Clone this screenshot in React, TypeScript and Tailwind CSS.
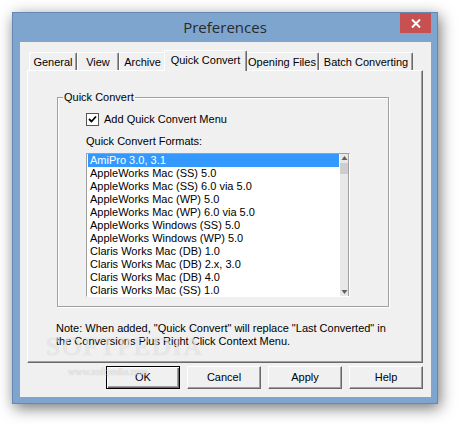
import React from "react";

const items = [
  "AmiPro 3.0, 3.1",
  "AppleWorks Mac (SS) 5.0",
  "AppleWorks Mac (SS) 6.0 via 5.0",
  "AppleWorks Mac (WP) 5.0",
  "AppleWorks Mac (WP) 6.0 via 5.0",
  "AppleWorks Windows (SS) 5.0",
  "AppleWorks Windows (WP) 5.0",
  "Claris Works Mac (DB) 1.0",
  "Claris Works Mac (DB) 2.x, 3.0",
  "Claris Works Mac (DB) 4.0",
  "Claris Works Mac (SS) 1.0",
  "Claris Works Mac (SS) 2.x, 3.0",
];

function Tab({ label, w }: { label: string; w: string }) {
  return (
    <div
      className={`${w} h-[18px] border-t border-l border-white border-r border-r-[#696969] rounded-t-[2px] shadow-[inset_-1px_0_0_#a0a0a0] flex items-center justify-center pt-[1px] whitespace-nowrap overflow-hidden`}
    >
      {label}
    </div>
  );
}

function Btn({ label, def }: { label: string; def?: boolean }) {
  return (
    <div
      className={
        def
          ? "w-[74px] h-[23px] border border-black bg-[#f0f0f0] shadow-[inset_1px_1px_0_#ffffff,inset_-1px_-1px_0_#696969,inset_-2px_-2px_0_#a0a0a0] flex items-center justify-center"
          : "w-[74px] h-[23px] bg-[#f0f0f0] border-t border-l border-white border-r border-b border-r-[#696969] border-b-[#696969] shadow-[inset_-1px_-1px_0_#a0a0a0] flex items-center justify-center"
      }
    >
      {label}
    </div>
  );
}

export default function App() {
  return (
    <div
      className="w-[458px] h-[424px] bg-white relative overflow-hidden text-[11px] leading-[13px] text-black"
      style={{ fontFamily: '"Liberation Sans", Arial, sans-serif' }}
    >
      <div className="absolute left-[12px] top-[12px] w-[426px] h-[392px] bg-[#7ea5cd] border border-[#6388b2] shadow-[2px_4px_14px_rgba(0,0,0,0.55)] flex flex-col">
        {/* title bar */}
        <div className="h-[29px] relative flex items-center justify-center shrink-0">
          <span
            className="text-[15px] leading-[18px] text-[#2a2a2a] mb-[1px]"
            style={{ fontFamily: '"Open Sans", "Noto Sans", sans-serif' }}
          >
            Preferences
          </span>
          <div className="absolute right-[6px] top-0 w-[31px] h-[20px] bg-[#c75050] flex items-center justify-center">
            <svg width="10" height="9" viewBox="0 0 10 9">
              <path d="M1 0.5 L9 8.5 M9 0.5 L1 8.5" stroke="white" strokeWidth="2" />
            </svg>
          </div>
        </div>

        {/* client */}
        <div className="ml-[7px] mr-[6px] mb-[6px] flex-1 bg-[#f0f0f0] flex flex-col pt-[8px]">
          {/* tabs */}
          <div className="h-[20px] flex items-end pl-[9px] relative z-10">
            <Tab label="General" w="w-[48px]" />
            <Tab label="View" w="w-[42px]" />
            <Tab label="Archive" w="w-[47px]" />
            <div className="w-[83px] h-[21px] -mx-[2px] -mb-[1px] bg-[#f0f0f0] border-t border-l border-white border-r border-r-[#696969] rounded-t-[2px] shadow-[inset_-1px_0_0_#a0a0a0] flex items-start justify-center pt-[3px] relative z-10 whitespace-nowrap">
              Quick Convert
            </div>
            <Tab label="Opening Files" w="w-[74px]" />
            <Tab label="Batch Converting" w="w-[94px]" />
          </div>

          {/* panel */}
          <div className="ml-[7px] w-[396px] h-[293px] border-t border-l border-white border-r border-b border-r-[#696969] border-b-[#696969] shadow-[inset_-1px_-1px_0_#a0a0a0] pl-[29px] pt-[26px]">
            {/* group box */}
            <div className="w-[332px] h-[210px] border border-[#a0a0a0] shadow-[inset_1px_1px_0_#ffffff,1px_1px_0_#ffffff] relative pl-[28px] pt-[15px]">
              <span className="absolute left-[5px] -top-[7px] bg-[#f0f0f0] px-[1px]">Quick Convert</span>
              <div className="flex items-center h-[13px]">
                <div className="w-[13px] h-[13px] bg-white border border-[#555] flex items-center justify-center">
                  <svg width="9" height="9" viewBox="0 0 9 9">
                    <path d="M1 4 L3.5 6.5 L8 1.5" stroke="black" strokeWidth="1.8" fill="none" />
                  </svg>
                </div>
                <span className="ml-[5px]">Add Quick Convert Menu</span>
              </div>
              <div className="mt-[9px] h-[13px]">Quick Convert Formats:</div>
              <div className="mt-[5px] w-[264px] h-[144px] border border-[#a0a0a0] border-r-white border-b-white bg-white flex overflow-hidden">
                <div className="w-[253px] flex flex-col">
                  {items.map((t, i) => (
                    <div
                      key={t}
                      className={
                        i === 0
                          ? "h-[13px] shrink-0 mx-[1px] bg-[#3399ff] text-white pl-[2px] whitespace-nowrap"
                          : "h-[13px] shrink-0 mx-[1px] pl-[2px] whitespace-nowrap"
                      }
                    >
                      {t}
                    </div>
                  ))}
                </div>
                <div className="w-[9px] bg-[#e8e8e8] border-r border-[#a0a0a0] flex flex-col items-center">
                  <svg width="7" height="7" viewBox="0 0 7 7" className="mt-[1px]">
                    <path d="M3.5 1 L6.5 5 L0.5 5 Z" fill="#606060" />
                  </svg>
                  <div className="w-[8px] h-[11px] bg-[#cdcdcd] mt-[1px]" />
                  <div className="flex-1" />
                  <svg width="7" height="7" viewBox="0 0 7 7" className="mb-[1px]">
                    <path d="M3.5 6 L6.5 2 L0.5 2 Z" fill="#606060" />
                  </svg>
                </div>
              </div>
            </div>
            <div className="mt-[15px] -ml-[1px] w-[340px]">
              <div>Note: When added, "Quick Convert" will replace "Last Converted" in</div>
              <div>the Conversions Plus Right Click Context Menu.</div>
            </div>
          </div>

          {/* buttons */}
          <div className="mt-[3px] flex justify-end gap-[7px] mr-[8px]">
            <Btn label="OK" def />
            <Btn label="Cancel" />
            <Btn label="Apply" />
            <Btn label="Help" />
          </div>
        </div>
      </div>

      {/* watermark */}
      <div
        className="absolute left-[46px] top-[334px] text-[26px] leading-[26px] tracking-[2px] text-white/60 pointer-events-none"
        style={{ fontFamily: '"Liberation Serif", serif', textShadow: "0 0 1px rgba(140,140,140,0.45)" }}
      >
        SOFTPEDIA
      </div>
      <div
        className="absolute left-[68px] top-[366px] text-[10px] leading-[12px] text-white/70 pointer-events-none"
        style={{ fontFamily: '"Liberation Serif", serif', textShadow: "0 0 1px rgba(110,110,110,0.5)" }}
      >
        www.softpedia.com
      </div>
    </div>
  );
}
